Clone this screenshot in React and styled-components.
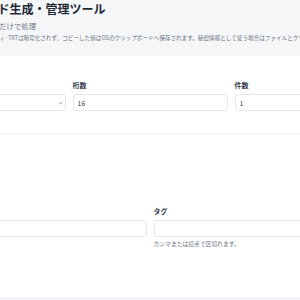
import React from "react";
import styled, { createGlobalStyle } from "styled-components";

const Global = createGlobalStyle`
  html, body { margin: 0; padding: 0; background: #f4f5f9; overflow: hidden; }
  body { font-family: "Noto Sans CJK JP", "Noto Sans", sans-serif; }
  #root { width: 300px; height: 300px; overflow: hidden; }
`;

const Page = styled.div`
  width: 300px;
  display: flex;
  flex-direction: column;
  align-items: center;
`;

const Header = styled.header`
  width: 300px;
  display: flex;
  justify-content: center;
  background: #f5f6f8;
  padding: 1px 0 13px;
`;

const Inner = styled.div`
  width: 479px;
  flex-shrink: 0;
`;

const TitleRow = styled.div`
  display: flex;
  align-items: center;
  gap: 11px;
  height: 16px;
`;

const Title = styled.h1`
  margin: 0;
  font-size: 12px;
  line-height: 16px;
  font-weight: 700;
  color: #1f2937;
  white-space: nowrap;
`;

const Subtitle = styled.p`
  margin: 4px 0 0;
  font-size: 7.4px;
  line-height: 10px;
  color: #6b7280;
  white-space: nowrap;
`;

const Note = styled.p`
  margin: 2px 0 0;
  font-size: 5.6px;
  line-height: 10px;
  color: #6b7280;
  white-space: nowrap;
`;

const Card = styled.section`
  width: 300px;
  display: flex;
  justify-content: center;
  background: #ffffff;
  padding: 24px 0 49px;
`;

const Grid = styled.div`
  display: grid;
  grid-template-columns: repeat(${(p) => p.$cols}, 1fr);
  column-gap: 7px;
`;

const Field = styled.div`
  display: flex;
  flex-direction: column;
  min-width: 0;
`;

const Label = styled.label`
  font-size: 7px;
  line-height: 10px;
  font-weight: 700;
  color: #374151;
  margin-bottom: 4px;
`;

const Box = styled.div`
  box-sizing: border-box;
  height: 17px;
  border: 1px solid #e5e7eb;
  border-radius: 3px;
  background: #fff;
  display: flex;
  align-items: center;
  justify-content: space-between;
  padding: ${(p) => (p.$select ? "0 2px 0 4px" : "0 4px")};
  font-size: 7px;
  color: #374151;
`;

const Help = styled.div`
  margin-top: 2px;
  font-size: 5.8px;
  line-height: 9px;
  color: #6b7280;
  white-space: nowrap;
`;

const Divider = styled.hr`
  border: 0;
  border-top: 1px solid #eceef1;
  margin: 22px 0 72px;
`;

const Chevron = () => (
  <svg width="5" height="4" viewBox="0 0 5 4" fill="none">
    <path d="M0.8 1.2 L2.5 2.8 L4.2 1.2" stroke="#6b7280" strokeWidth="0.8" />
  </svg>
);

const Lock = () => (
  <svg width="28" height="14" viewBox="0 0 28 14" fill="none">
    <rect x="8" y="6" width="10" height="7" rx="1.5" fill="#4f46e5" />
    <path d="M10 6V4a3 3 0 0 1 6 0v2" stroke="#4f46e5" strokeWidth="1.4" />
  </svg>
);

export default function App() {
  return (
    <>
      <Global />
      <Page>
        <Header>
          <Inner>
            <TitleRow>
              <Lock />
              <Title>パスワード生成・管理ツール</Title>
            </TitleRow>
            <Subtitle>外部通信なし。ブラウザ内だけで処理</Subtitle>
            <Note>
              エクスポートした各設定のプロパティ·TXTは暗号化されず、コピーした値はOSのクリップボードへ保存されます。秘密情報として使う場合はファイルとクリップボードの扱いに注意してください。
            </Note>
          </Inner>
        </Header>
        <Card>
          <Inner>
            <Grid $cols={3}>
              <Field>
                <Label>文字種</Label>
                <Box $select>
                  <span>標準</span>
                  <Chevron />
                </Box>
              </Field>
              <Field>
                <Label>桁数</Label>
                <Box>16</Box>
              </Field>
              <Field>
                <Label>件数</Label>
                <Box>1</Box>
              </Field>
            </Grid>
            <Divider />
            <Grid $cols={2}>
              <Field>
                <Label>サービス名</Label>
                <Box />
              </Field>
              <Field>
                <Label>タグ</Label>
                <Box />
                <Help>カンマまたは読点で区切れます。</Help>
              </Field>
            </Grid>
          </Inner>
        </Card>
      </Page>
    </>
  );
}
